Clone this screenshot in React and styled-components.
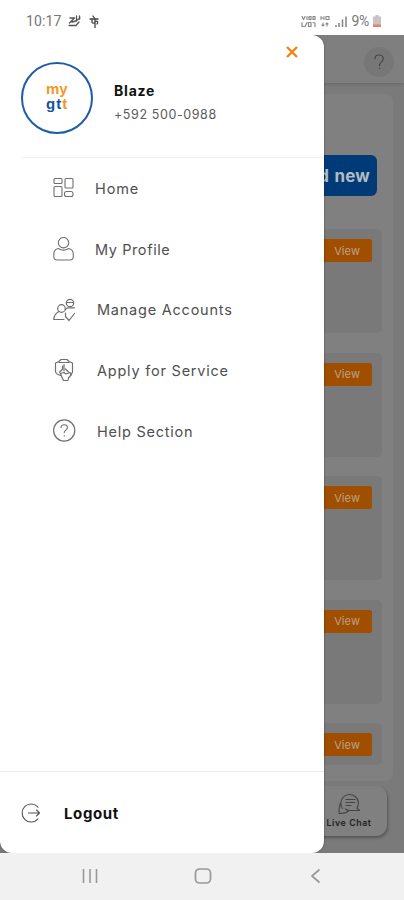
import React from 'react';
import styled, { createGlobalStyle } from 'styled-components';

const GlobalStyle = createGlobalStyle`
  * {
    box-sizing: border-box;
  }

  body {
    margin: 0;
    background: #fff;
    font-family: Inter, 'Liberation Sans', sans-serif;
  }
`;

const Screen = styled.div`
  width: 404px;
  height: 900px;
  display: flex;
  flex-direction: column;
  overflow: hidden;
`;

const StatusBar = styled.header`
  height: 35px;
  flex: none;
  display: flex;
  justify-content: space-between;
  align-items: center;
  padding: 7px 23px 0 26px;
  font-family: Roboto, sans-serif;
  font-size: 14px;
  color: #777;
`;

const StatusGroup = styled.div`
  display: flex;
  align-items: center;
  gap: ${({ $gap }) => $gap}px;
`;

const Clock = styled.span`
  letter-spacing: 0.15px;
`;

const Battery = styled.span`
  letter-spacing: -0.3px;
`;

const Stage = styled.main`
  position: relative;
  height: 818px;
  flex: none;
  overflow: hidden;
  background: #7a7a7a;
`;

const TopBar = styled.div`
  height: 48px;
  display: flex;
  justify-content: flex-end;
  align-items: center;
  padding: 5px 10px 0 0;
  background: #7f7f7f;
  box-shadow: 0 1px 3px rgba(0, 0, 0, 0.16);
`;

const HelpButton = styled.div`
  width: 30px;
  height: 30px;
  display: grid;
  place-items: center;
  border-radius: 50%;
  background: #777;
`;

const Panel = styled.section`
  height: 687px;
  margin: 11px 11px 0;
  padding: 61px 11px 0;
  display: flex;
  flex-direction: column;
  border-radius: 8px;
  background: #808080;
`;

const AddButton = styled.div`
  flex: none;
  align-self: flex-end;
  width: 130px;
  height: 41px;
  margin: 0 5px 33px 0;
  padding-right: 7px;
  display: flex;
  align-items: center;
  justify-content: flex-end;
  border-radius: 6px;
  background: #003b78;
  color: #b4bac1;
  font-size: 17px;
  font-weight: 700;
  letter-spacing: 0.2px;
  word-spacing: 1px;
  white-space: nowrap;
`;

const AccountCard = styled.div`
  flex: none;
  height: ${({ $height }) => $height || 104}px;
  margin-bottom: 19.6px;
  padding: 10px 10px 0 0;
  display: flex;
  justify-content: flex-end;
  align-items: flex-start;
  border-radius: 5px;
  background: #797979;
`;

const ViewButton = styled.div`
  width: 70px;
  height: 23px;
  padding-right: 12px;
  display: flex;
  justify-content: flex-end;
  align-items: center;
  border-radius: 2.5px;
  background: #a04e00;
  color: #bba28b;
  font-size: 11px;
  letter-spacing: 0.1px;
`;

const ChatCard = styled.div`
  position: absolute;
  right: 17px;
  bottom: 17px;
  width: 76px;
  height: 50px;
  padding-top: 6px;
  display: flex;
  flex-direction: column;
  align-items: center;
  gap: 3px;
  border-radius: 11px;
  background: #808080;
  box-shadow: 1px 2px 3px rgba(0, 0, 0, 0.3);
  color: #222;
  font-size: 8.8px;
  font-weight: 600;
  letter-spacing: 0.6px;
  white-space: nowrap;
`;

const Drawer = styled.aside`
  position: absolute;
  top: 0;
  left: 0;
  width: 324px;
  height: 100%;
  display: flex;
  flex-direction: column;
  border-radius: 0 12px 12px 12px;
  background: #fff;
  box-shadow: 0 0 2px rgba(0, 0, 0, 0.5);
`;

const Profile = styled.div`
  position: relative;
  height: 123px;
  margin-left: 21px;
  padding-top: 27px;
  display: flex;
  align-items: flex-start;
  gap: 21px;
  border-bottom: 1px solid #f4f0f2;
`;

const Avatar = styled.div`
  width: 72px;
  height: 72px;
  padding: 17px 0 0 23px;
  border: 2px solid #1f5ca6;
  border-radius: 50%;
  font-family: 'Liberation Sans', sans-serif;
  font-weight: 700;
  font-size: 15px;
  line-height: 15px;
  color: #f5961e;
`;

const LogoRow = styled.div`
  height: 15px;
  letter-spacing: ${({ $spacing }) => $spacing || 0}px;
`;

const Blue = styled.span`
  color: #16539b;
`;

const Person = styled.div`
  padding-top: 20px;
`;

const Name = styled.div`
  font-size: 14px;
  line-height: 17px;
  font-weight: 700;
  letter-spacing: 0.8px;
  color: #111;
`;

const Phone = styled.div`
  padding-top: 7px;
  font-size: 12.5px;
  line-height: 17px;
  letter-spacing: 0.6px;
  color: #5a5a5a;
`;

const CloseButton = styled.div`
  position: absolute;
  top: 11px;
  right: 26px;
  width: 12px;
  height: 12px;
  line-height: 0;
`;

const Menu = styled.nav`
  flex: 1;
  padding-left: 52px;
`;

const MenuItem = styled.div`
  height: 60.7px;
  display: flex;
  align-items: center;
  gap: ${({ $gap }) => $gap}px;
  font-size: 14.5px;
  color: #505050;
  letter-spacing: ${({ $spacing }) => $spacing}px;
  white-space: nowrap;
`;

const Logout = styled.div`
  height: 82px;
  padding: 1px 0 0 20px;
  display: flex;
  align-items: center;
  gap: 22px;
  border-top: 1px solid #fde3e6;
  font-size: 15px;
  font-weight: 700;
  letter-spacing: 0.6px;
  color: #111;
`;

const NavBar = styled.footer`
  flex: 1;
  display: flex;
  align-items: center;
  padding: 0 81px 2px;
  background: #f1f1f1;
`;

const NavButton = styled.div`
  width: ${({ $width }) => $width}px;
  line-height: 0;
`;

const Icon = ({ size = 24, width, height, stroke = '#707070', weight = 1.1, children }) => (
  <svg
    width={width || size}
    height={height || size}
    viewBox={`0 0 ${width || size} ${height || size}`}
    fill="none"
    stroke={stroke}
    strokeWidth={weight}
    strokeLinecap="round"
    strokeLinejoin="round"
  >
    {children}
  </svg>
);

const HomeIcon = () => (
  <Icon>
    <rect x="2" y="2.5" width="8" height="5" rx="1" />
    <rect x="13" y="2.5" width="8" height="9.5" rx="1" />
    <rect x="2" y="10.5" width="8" height="10" rx="1" />
    <rect x="12.5" y="15.5" width="8.5" height="5" rx="2" />
  </Icon>
);

const UserIcon = () => (
  <Icon>
    <circle cx="11.5" cy="5.7" r="5.2" />
    <path d="M6.500 11.500C3.500 12 1.800 14.500 1.800 17.500v2c0 2.500 1 3.500 3.500 3.500h12.500c2.500 0 3.500-1 3.500-3.500v-2c0-3-1.700-5.500-4.700-6-1.500 1-3.200 1.600-5 1.600s-3.600-.6-5.100-1.600z" />
  </Icon>
);

const AccountsIcon = () => (
  <Icon weight={1.2}>
    <circle cx="9.500" cy="10.500" r="3.800" />
    <circle cx="18" cy="5" r="3.700" />
    <path d="M14.500 4.500h7M22.500 9.800h-6c-1.500 0-2.500.7-3 1.700M7 13.500c-3 1.500-5 4-5.200 8H12M13.500 15v3.500l3.500 4 5.500-7" />
  </Icon>
);

const ServiceIcon = () => (
  <Icon weight={1.2}>
    <path d="M8.500 17.500L5 16l-1.500-2V5L7 3.500 9 1.500h6l2 2L20.500 5v9L19 17" />
    <path d="M7 4.500h10M12 6.500v6.500M10.500 8v3L7.500 14.500M13.500 11l3 3" />
    <path d="M8.500 15.500l3.500-1 2 1.500 4-1.500 1 2.500-2.500 3-.5 2.500h-4.500L10 19.500z" />
  </Icon>
);

const HelpIcon = () => (
  <Icon>
    <circle cx="12.200" cy="11.500" r="10.600" strokeWidth="1.2" />
    <path d="M9 8.800c0-1.800 1.300-3 3.200-3s3.200 1.200 3.200 2.800c0 2.300-3.200 2.700-3.200 5M12.200 16.500v.5" />
  </Icon>
);

const LogoutIcon = () => (
  <Icon size={22} stroke="#555" weight={1.1}>
    <path d="M18 5.200a9 9 0 1 0 0 11.600M8.500 11h11M16.500 8l3 3-3 3" />
  </Icon>
);

const menuItems = [
  { label: 'Home', icon: HomeIcon, gap: 19, spacing: 0.9 },
  { label: 'My Profile', icon: UserIcon, gap: 19, spacing: 0.6 },
  { label: 'Manage Accounts', icon: AccountsIcon, gap: 21, spacing: 0.77 },
  { label: 'Apply for Service', icon: ServiceIcon, gap: 21, spacing: 0.78 },
  { label: 'Help Section', icon: HelpIcon, gap: 21, spacing: 0.75 },
];

const App = () => {
  return (
    <Screen>
      <GlobalStyle />
      <StatusBar>
        <StatusGroup $gap={6}>
          <Clock>10:17</Clock>
          <Icon width={13} height={12} stroke="#555" weight={1.3}>
            <path d="M2 3h4.500L1.500 8M1 10.500h7L11 7M4 7l4-1 4-3M8.500 1v5M11.500 1v3" />
          </Icon>
          <Icon width={13} height={13} stroke="#444" weight={1.3}>
            <path d="M3 4h8M8 4v8.500M5 4v3.500c.7 1 2 .8 3 0M6 1l2 3M8 6.500c3-1 3 1 2 2.500" />
          </Icon>
        </StatusGroup>
        <StatusGroup $gap={4}>
          <Icon width={15} height={13} stroke="#888" weight={1.2}>
            <path d="M1 1.500l1.500 3 1.500-3M6 1.500v3M8 1.500v3h2v-3zM12 1.500v3h2v-3zM1 7.500v4h2M6 7.500l-2 4M7.500 7.500v4h2.500v-4zM12 7.500l2 .5v3.500" />
          </Icon>
          <Icon width={11} height={13} stroke="#888" weight={1.1}>
            <path d="M1 1.500v3M1 3h2M4 1.500v3M6 1.500v3h3v-3zM3 8v3M2 10l1 1 1-1M7 11V8M6 9l1-1 1 1" />
          </Icon>
          <Icon width={12} height={13} stroke="#888" weight={1.6}>
            <path d="M1 12v-2M4 12V8M7.500 12V4.500M11 12V1.500" strokeLinecap="butt" />
          </Icon>
          <Battery>9%</Battery>
          <svg width="8" height="12" viewBox="0 0 8 12">
            <path d="M2.500 0h3v1.500H8V12H0V1.500h2.500z" fill="#c6c3c2" />
            <path d="M0 9.500h8V12H0z" fill="#ef7d68" />
          </svg>
        </StatusGroup>
      </StatusBar>

      <Stage>
        <TopBar>
          <HelpButton>
            <Icon width={12} height={16} stroke="#464646" weight={1.2}>
              <path d="M2 4.500C2 2.300 3.600 1 6 1s4.300 1.500 4.300 3.700C10.300 7.800 6.500 8 6.500 11.500M6.500 14.200v.4" />
            </Icon>
          </HelpButton>
        </TopBar>
        <Panel>
          <AddButton>Add new</AddButton>
          {[104, 104, 104, 104, 42].map((height, i) => (
            <AccountCard key={i} $height={height}>
              <ViewButton>View</ViewButton>
            </AccountCard>
          ))}
        </Panel>
        <ChatCard>
          <Icon width={24} height={22} stroke="#444" weight={1.1}>
            <path d="M5.500 16.500A8.800 8.800 0 1 1 20 16l2.500 2.500H13c-2 0-3.500-.5-4.500-1.500M4 10c-2 3.500-2 7-2 11.500 3.500 0 7-.2 9.500-2.500M9 7.500h9M9 10.500h9M9 13.500h5" />
          </Icon>
          Live Chat
        </ChatCard>

        <Drawer>
          <Profile>
            <Avatar>
              <LogoRow>my</LogoRow>
              <LogoRow $spacing={1}>
                <Blue>gt</Blue>t
              </LogoRow>
            </Avatar>
            <Person>
              <Name>Blaze</Name>
              <Phone>+592 500-0988</Phone>
            </Person>
            <CloseButton>
              <Icon size={12} stroke="#f58210" weight={2.4}>
                <path d="M1 1l10 10M11 1L1 11" strokeLinecap="butt" />
              </Icon>
            </CloseButton>
          </Profile>
          <Menu>
            {menuItems.map(({ label, icon: ItemIcon, gap, spacing }) => (
              <MenuItem key={label} $gap={gap} $spacing={spacing}>
                <ItemIcon />
                {label}
              </MenuItem>
            ))}
          </Menu>
          <Logout>
            <LogoutIcon />
            Logout
          </Logout>
        </Drawer>
      </Stage>

      <NavBar>
        <NavButton $width={113}>
          <Icon width={18} height={16} stroke="#999" weight={1.6}>
            <path d="M2.500 1v14M9 1v14M15.500 1v14" strokeLinecap="butt" />
          </Icon>
        </NavButton>
        <NavButton $width={116}>
          <Icon width={18} height={16} stroke="#999" weight={1.7}>
            <rect x="1.500" y="1" width="15" height="14" rx="4" />
          </Icon>
        </NavButton>
        <NavButton $width={12}>
          <Icon width={12} height={16} stroke="#999" weight={1.7}>
            <path d="M9.500 1.500L2 8l7.500 6.500" strokeLinecap="butt" />
          </Icon>
        </NavButton>
      </NavBar>
    </Screen>
  );
};

export default App;
